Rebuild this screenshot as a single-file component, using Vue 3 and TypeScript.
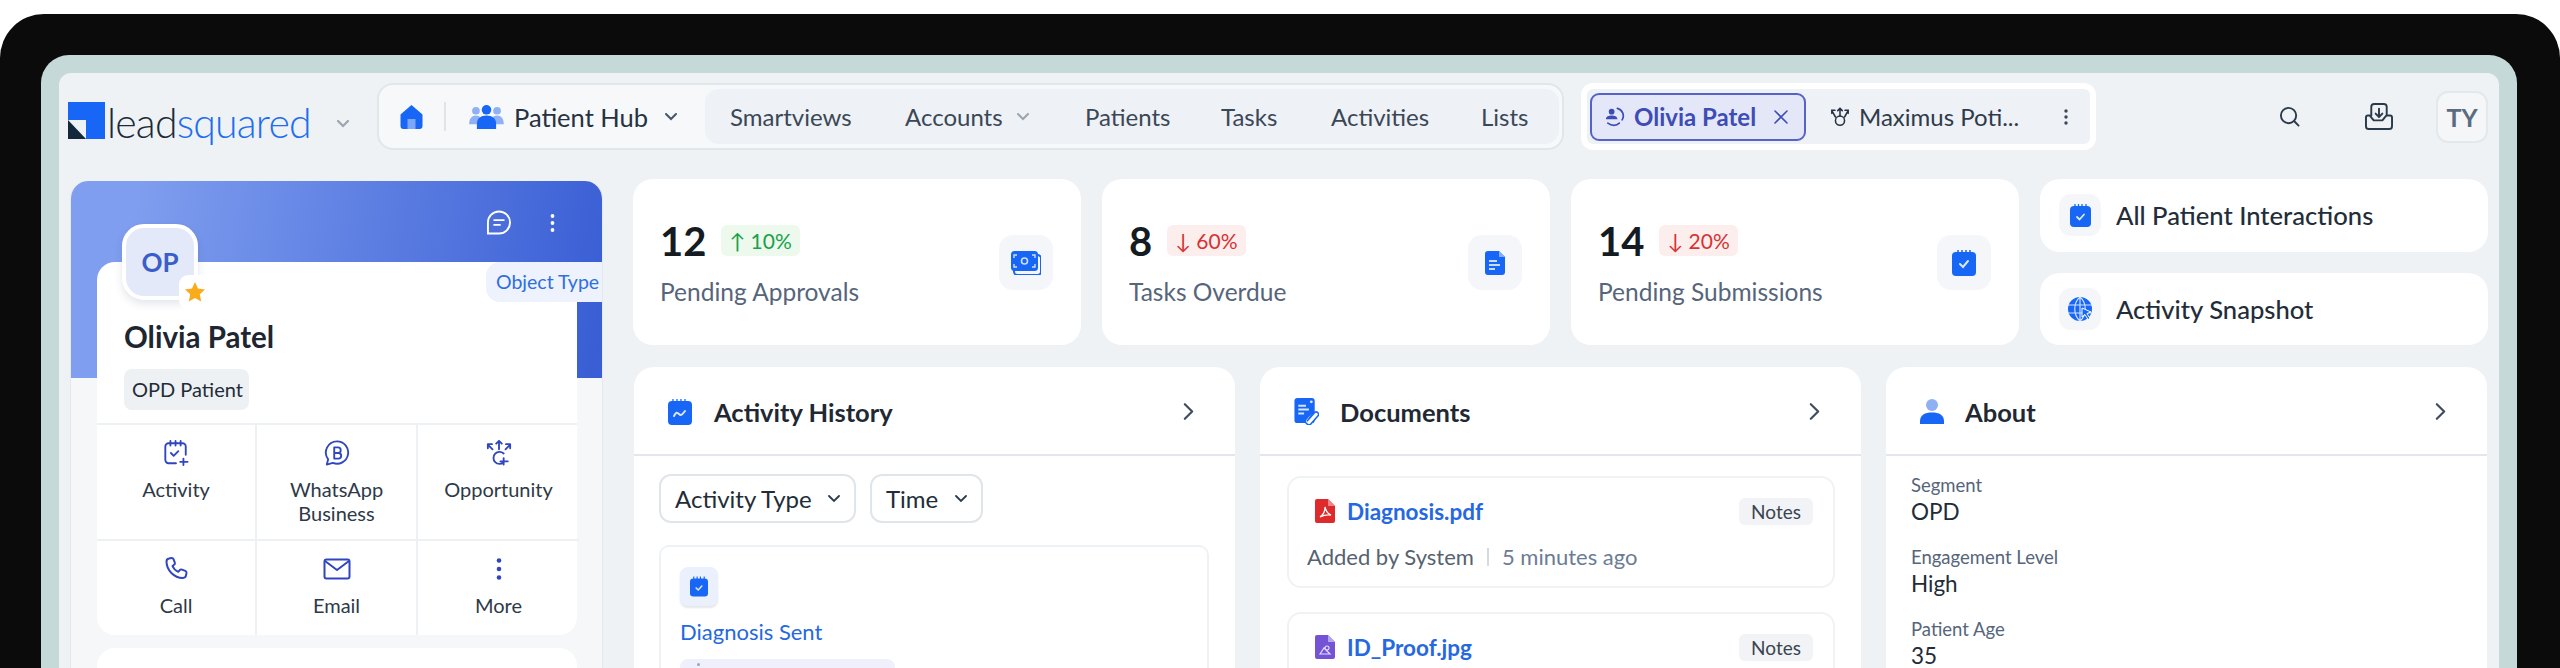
<script setup lang="ts">
const navItems = [
  { label: 'Smartviews', w: 125 },
  { label: 'Accounts', w: 96, chevron: true },
  { label: 'Patients', w: 86 },
  { label: 'Tasks', w: 60 },
  { label: 'Activities', w: 95 },
  { label: 'Lists', w: 48 },
]
const about = [
  { k: 'Segment', v: 'OPD' },
  { k: 'Engagement Level', v: 'High' },
  { k: 'Patient Age', v: '35' },
]
</script>

<template>
  <div class="page">
  <div class="frame">
    <div class="bezel">
      <div class="screen">
        <header class="top">
          <div class="logo">
            <svg class="logo-mark" viewBox="0 0 37 37" width="37" height="37">
              <rect width="37" height="37" fill="#1766f5" />
              <path d="M0 18h18v19H0z" fill="#eef2f5" />
              <path d="M0 18l18 19H0z" fill="#14283c" />
            </svg>
            <span class="logo-text"><span class="lead">lead</span><span class="squared">squared</span></span>
            <svg class="logo-chev" viewBox="0 0 12 8" width="12" height="8"><path d="M1 1l5 5 5-5" fill="none" stroke="#9aa5b1" stroke-width="2.2" stroke-linecap="round" /></svg>
          </div>

          <nav class="nav">
            <div class="nav-left">
              <svg class="home" viewBox="0 0 23 24" width="23" height="24">
                <path d="M11.5 0l11 9.5V21a3 3 0 0 1-3 3h-16a3 3 0 0 1-3-3V9.5z" fill="#1766f5" />
                <path d="M7.5 14h8v10h-8z" fill="#7ea6f7" />
              </svg>
              <span class="divider"></span>
              <svg class="people" viewBox="0 0 36 25" width="35" height="24">
                <circle cx="7" cy="6" r="4" fill="#8fb0f5" /><circle cx="29" cy="6" r="4" fill="#8fb0f5" />
                <path d="M0 20c0-6 3-9 7-9s7 3 7 9zM22 20c0-6 3-9 7-9s7 3 7 9z" fill="#8fb0f5" />
                <circle cx="18" cy="5" r="5" fill="#1766f5" />
                <path d="M8 25v-5c0-6 4-9 10-9s10 3 10 9v5z" fill="#1766f5" />
              </svg>
              <span class="hub">Patient Hub</span>
              <svg class="chev" viewBox="0 0 12 8" width="12" height="8"><path d="M1 1l5 5 5-5" fill="none" stroke="#47566a" stroke-width="2" stroke-linecap="round" /></svg>
            </div>
            <div class="nav-right">
              <span v-for="n in navItems" :key="n.label" class="nav-item" :style="{ width: n.w + 'px' }">{{ n.label }}
                <svg v-if="n.chevron" class="nav-chev" viewBox="0 0 12 8" width="12" height="8"><path d="M1 1l5 5 5-5" fill="none" stroke="#9aa5b1" stroke-width="2" stroke-linecap="round" /></svg>
              </span>
            </div>
          </nav>

          <div class="tabs">
            <div class="tab-active">
              <svg viewBox="0 0 22 22" width="21" height="21" fill="none">
                <circle cx="8" cy="6" r="3" fill="#3d4db5" /><path d="M2 14c0-3 3-4 6-4s6 1 6 4z" fill="#3d4db5" />
                <path d="M14 2.5a8 8 0 0 1 5 12M4 18c4 3 9 3 12 0" stroke="#3d4db5" stroke-width="1.8" stroke-linecap="round" />
              </svg>
              <span class="tab-name">Olivia Patel</span>
              <svg class="tab-x" viewBox="0 0 14 14" width="14" height="14"><path d="M1 1l12 12M13 1L1 13" stroke="#3d4db5" stroke-width="1.6" stroke-linecap="round" /></svg>
            </div>
            <div class="tab-other">
              <svg viewBox="0 0 22 22" width="20" height="20" fill="none" stroke="#263241" stroke-width="1.7" stroke-linecap="round">
                <circle cx="11" cy="15" r="5" /><path d="M11 10V2M8.5 4L11 1.5 13.5 4M6 11L2 4M2 7V3.5h3.5M16 11l4-7M20 7V3.5h-3.5" />
              </svg>
              <span class="tab-name2">Maximus Poti...</span>
              <svg class="tab-dots" viewBox="0 0 4 18" width="4" height="18"><circle cx="2" cy="3" r="1.7" fill="#3a4757" /><circle cx="2" cy="9" r="1.7" fill="#3a4757" /><circle cx="2" cy="15" r="1.7" fill="#3a4757" /></svg>
            </div>
          </div>

          <div class="top-actions">
            <svg viewBox="0 0 22 22" width="21" height="21" fill="none" stroke="#2b3a4a" stroke-width="2" stroke-linecap="round"><circle cx="10" cy="10" r="8" /><path d="M16 16l4.5 4.500" /></svg>
            <svg class="inbox" viewBox="0 0 30 28" width="30" height="27" fill="none" stroke="#2b3a4a" stroke-width="2" stroke-linecap="round" stroke-linejoin="round">
              <path d="M7 13V4a3 3 0 0 1 3-3h10a3 3 0 0 1 3 3v9M1.500 15v9a3 3 0 0 0 3 3h21a3 3 0 0 0 3-3v-9a2 2 0 0 0-2-2h-4l-4 5h-9l-4-5H3.500a2 2 0 0 0-2 2zM15 6v8M11.500 11l3.500 3.500 3.500-3.500" />
            </svg>
            <div class="user">TY</div>
          </div>
        </header>

        <main class="main">
          <aside class="profile">
            <div class="profile-actions">
              <svg viewBox="0 0 26 26" width="26" height="25" fill="none" stroke="#fff" stroke-width="2" stroke-linecap="round"><path d="M13 1.500a11.500 11.500 0 1 1 0 23H1.500V13A11.500 11.500 0 0 1 13 1.500zM8 10.500h10M8 15.500h6" /></svg>
              <svg viewBox="0 0 4 20" width="5" height="20"><circle cx="2" cy="3" r="1.900" fill="#fff" /><circle cx="2" cy="10" r="1.900" fill="#fff" /><circle cx="2" cy="17" r="1.900" fill="#fff" /></svg>
            </div>
            <div class="avatar">OP
              <span class="star"><svg viewBox="0 0 22 22" width="22" height="22"><path d="M11 1l3 6.600 7 .9-5.200 4.800 1.400 7.200L11 17l-6.200 3.500 1.400-7.200L1 8.500l7-.9z" fill="#f9ab1b" /></svg></span>
            </div>
            <div class="person">
              <span class="obj-type">Object Type</span>
              <h2 class="name">Olivia Patel</h2>
              <span class="chip">OPD Patient</span>
              <div class="actions">
                <div class="act">
                  <svg viewBox="0 0 28 28" width="28" height="28" fill="none" stroke="#2f46c0" stroke-width="2" stroke-linecap="round" stroke-linejoin="round"><path d="M14 25H6a3.500 3.500 0 0 1-3.500-3.500V7A3.500 3.500 0 0 1 6 3.500h15A3.500 3.500 0 0 1 24.500 7v9M8 1v5M13.500 1v5M19 1v5M8.500 14l3 3 5-5M22 20v7M18.500 23.500h8" /></svg>
                  <span>Activity</span>
                </div>
                <div class="act">
                  <svg viewBox="0 0 28 28" width="28" height="28" fill="none" stroke="#2f46c0" stroke-width="2" stroke-linecap="round" stroke-linejoin="round"><path d="M14 1.500a12 12 0 1 1-4.500 23.100L3 26.500l1.500-5.700A12 12 0 0 1 14 1.500zM11 8h4a2.800 2.800 0 0 1 0 6h-4zM11 14h4.500a2.900 2.900 0 0 1 0 6H11z" /></svg>
                  <span>WhatsApp<br />Business</span>
                </div>
                <div class="act">
                  <svg viewBox="0 0 28 28" width="28" height="28" fill="none" stroke="#2f46c0" stroke-width="2" stroke-linecap="round" stroke-linejoin="round"><path d="M14 10V1.500M11 4l3-3 3 3M7 10L2 5M2 9V4.500h4.500M21 10l5-5M26 9V4.500h-4.500M19 14.500A6.500 6.500 0 1 0 19 24M19 19.500v7M15.500 23h8" /></svg>
                  <span>Opportunity</span>
                </div>
                <div class="act">
                  <svg viewBox="0 0 24 24" width="24" height="25" fill="none" stroke="#2f46c0" stroke-width="2" stroke-linecap="round" stroke-linejoin="round"><path d="M5 1.500l2.500-.500a2 2 0 0 1 2 1.200l1.300 3.300a2 2 0 0 1-.7 2.300L8.500 9c1 2.500 3.200 4.700 5.800 5.800l1.400-1.600a2 2 0 0 1 2.300-.6l3.300 1.300a2 2 0 0 1 1.200 2l-.5 2.500a3 3 0 0 1-3 2.500C10 21 2.500 13 2.500 4.500A3 3 0 0 1 5 1.500z" /></svg>
                  <span>Call</span>
                </div>
                <div class="act">
                  <svg viewBox="0 0 28 22" width="28" height="22" fill="none" stroke="#2f46c0" stroke-width="2" stroke-linejoin="round"><rect x="1.500" y="1.500" width="25" height="19" rx="2" /><path d="M2 3l12 9 12-9" /></svg>
                  <span>Email</span>
                </div>
                <div class="act">
                  <svg viewBox="0 0 6 24" width="6" height="24"><circle cx="3" cy="3.500" r="2.300" fill="#2f46c0" /><circle cx="3" cy="12" r="2.300" fill="#2f46c0" /><circle cx="3" cy="20.500" r="2.300" fill="#2f46c0" /></svg>
                  <span>More</span>
                </div>
              </div>
            </div>
            <div class="profile-next"></div>
          </aside>

          <div class="content">
            <section class="stats">
              <div class="stat">
                <div class="stat-body">
                  <div class="stat-top"><span class="num">12</span><span class="delta up">↑ 10%</span></div>
                  <div class="stat-label">Pending Approvals</div>
                </div>
                <div class="stat-icon">
                  <svg viewBox="0 0 30 24" width="30" height="24">
                    <rect x="3" y="4" width="27" height="20" rx="3.500" fill="none" stroke="#1766f5" stroke-width="2" />
                    <rect width="27" height="20" rx="3.500" fill="#1766f5" />
                    <circle cx="13.500" cy="10" r="3" fill="none" stroke="#cfe0ff" stroke-width="1.600" />
                    <path d="M3 7V4h3M24 7V4h-3M3 13v3h3M24 13v3h-3" fill="none" stroke="#cfe0ff" stroke-width="1.400" />
                  </svg>
                </div>
              </div>
              <div class="stat">
                <div class="stat-body">
                  <div class="stat-top"><span class="num">8</span><span class="delta down">↓ 60%</span></div>
                  <div class="stat-label">Tasks Overdue</div>
                </div>
                <div class="stat-icon">
                  <svg viewBox="0 0 20 24" width="20" height="24">
                    <path d="M3 0h11l6 6v15a3 3 0 0 1-3 3H3a3 3 0 0 1-3-3V3a3 3 0 0 1 3-3z" fill="#1766f5" />
                    <path d="M14 0l6 6h-6z" fill="#86adf8" />
                    <path d="M4 10h8M4 14h11M4 18h6" stroke="#c9dcff" stroke-width="2" />
                  </svg>
                </div>
              </div>
              <div class="stat">
                <div class="stat-body">
                  <div class="stat-top"><span class="num">14</span><span class="delta down">↓ 20%</span></div>
                  <div class="stat-label">Pending Submissions</div>
                </div>
                <div class="stat-icon">
                  <svg viewBox="0 0 24 26" width="24" height="26">
                    <rect y="2" width="24" height="24" rx="4" fill="#1766f5" />
                    <path d="M6 0v3M10 0v3M14 0v3M18 0v3" stroke="#1766f5" stroke-width="1.500" />
                    <path d="M8 14l3 3 5-6" fill="none" stroke="#dbe8ff" stroke-width="2" stroke-linecap="round" />
                  </svg>
                </div>
              </div>
              <div class="shortcuts">
                <div class="shortcut">
                  <span class="short-icon">
                    <svg viewBox="0 0 21 23" width="21" height="23"><rect y="2" width="21" height="21" rx="4" fill="#1766f5" /><path d="M5 0v3M8.500 0v3M12 0v3M16 0v3" stroke="#1766f5" stroke-width="1.300" /><path d="M7 13l2.500 2.500L14 10.500" fill="none" stroke="#dbe8ff" stroke-width="1.800" stroke-linecap="round" /></svg>
                  </span>
                  <span class="short-label">All Patient Interactions</span>
                </div>
                <div class="shortcut">
                  <span class="short-icon">
                    <svg viewBox="0 0 24 26" width="24" height="26"><circle cx="12" cy="13" r="12" fill="#1766f5" /><path d="M0 9h24M0 17h24M12 1v24M12 1c-7 6-7 18 0 24M12 1c7 6 7 18 0 24" fill="none" stroke="#cfe0ff" stroke-width="1.200" /><path d="M14 12l9 4-4 1.500 3 5-2 1-3-5-3 2.500z" fill="#1766f5" stroke="#fff" stroke-width="1" /></svg>
                  </span>
                  <span class="short-label">Activity Snapshot</span>
                </div>
              </div>
            </section>

            <section class="panels">
              <article class="panel">
                <div class="panel-head">
                  <svg viewBox="0 0 24 26" width="24" height="26"><rect y="2" width="24" height="24" rx="4" fill="#1766f5" /><path d="M5 0v3M9 0v3M13 0v3M17 0v3" stroke="#1766f5" stroke-width="1.300" /><path d="M6 17c2-4 3-4 5-2s3 1 6-3" fill="none" stroke="#dbe8ff" stroke-width="2" stroke-linecap="round" /></svg>
                  <h3 class="first-title">Activity History</h3>
                  <svg class="head-chev" viewBox="0 0 12 20" width="11" height="19"><path d="M2 2l8 8-8 8" fill="none" stroke="#3f4d5e" stroke-width="2.400" stroke-linecap="round" stroke-linejoin="round" /></svg>
                </div>
                <div class="panel-body">
                  <div class="filters">
                    <div class="select sel-type">Activity Type<svg viewBox="0 0 12 8" width="12" height="8"><path d="M1 1l5 5 5-5" fill="none" stroke="#2b3a4a" stroke-width="1.800" stroke-linecap="round" /></svg></div>
                    <div class="select sel-time">Time<svg viewBox="0 0 12 8" width="12" height="8"><path d="M1 1l5 5 5-5" fill="none" stroke="#2b3a4a" stroke-width="1.800" stroke-linecap="round" /></svg></div>
                  </div>
                  <div class="timeline-card">
                    <span class="tl-icon">
                      <svg viewBox="0 0 19 21" width="18" height="21"><rect y="2" width="19" height="19" rx="3.500" fill="#1766f5" /><path d="M4 0v3M7.500 0v3M11 0v3M15 0v3" stroke="#1766f5" stroke-width="1.200" /><path d="M6.500 12l2.200 2.200L12.500 10" fill="none" stroke="#dbe8ff" stroke-width="1.600" stroke-linecap="round" /></svg>
                    </span>
                    <div class="tl-title">Diagnosis Sent</div>
                    <div class="tl-tag"><span class="tl-mark"></span></div>
                  </div>
                </div>
              </article>

              <article class="panel">
                <div class="panel-head">
                  <svg viewBox="0 0 25 28" width="25" height="27">
                    <path d="M3 0h15a3 3 0 0 1 3 3v20a3 3 0 0 1-3 3H3a3 3 0 0 1-3-3V3a3 3 0 0 1 3-3z" fill="#1766f5" />
                    <path d="M4 8h8M4 12h11M4 16h6" stroke="#d6e4ff" stroke-width="2" />
                    <circle cx="17.500" cy="4" r="1.500" fill="#d6e4ff" />
                    <path d="M13 24l8-9a2.500 2.500 0 0 1 3.500 3.500l-8 9a4 4 0 0 1-5-5l7-8" fill="#fff" stroke="#1766f5" stroke-width="1.600" />
                  </svg>
                  <h3>Documents</h3>
                  <svg class="head-chev" viewBox="0 0 12 20" width="11" height="19"><path d="M2 2l8 8-8 8" fill="none" stroke="#3f4d5e" stroke-width="2.400" stroke-linecap="round" stroke-linejoin="round" /></svg>
                </div>
                <div class="panel-body docs">
                  <div class="doc">
                    <div class="doc-top">
                      <svg viewBox="0 0 20 24" width="20" height="24"><path d="M2 0h11l7 7v15a2 2 0 0 1-2 2H2a2 2 0 0 1-2-2V2a2 2 0 0 1 2-2z" fill="#de2a2a" /><path d="M13 0l7 7h-7z" fill="#f08585" /><path d="M5 18c3-2 5-6 5-10 1 4 3 7 6 8-4-.5-7 0-11 2z" fill="none" stroke="#fff" stroke-width="1.300" /></svg>
                      <span class="doc-name">Diagnosis.pdf</span>
                      <span class="notes">Notes</span>
                    </div>
                    <div class="doc-sub"><span class="by">Added by System</span><span class="sep"></span><span class="ago">5 minutes ago</span></div>
                  </div>
                  <div class="doc">
                    <div class="doc-top">
                      <svg viewBox="0 0 20 24" width="20" height="24"><path d="M2 0h11l7 7v15a2 2 0 0 1-2 2H2a2 2 0 0 1-2-2V2a2 2 0 0 1 2-2z" fill="#7453d4" /><path d="M13 0l7 7h-7z" fill="#b6a4ec" /><path d="M5 19l4-6 3 3 3 3zM12 11a2 2 0 1 0 .1 0" fill="none" stroke="#e6dfff" stroke-width="1.200" /></svg>
                      <span class="doc-name">ID_Proof.jpg</span>
                      <span class="notes">Notes</span>
                    </div>
                  </div>
                </div>
              </article>

              <article class="panel">
                <div class="panel-head">
                  <svg viewBox="0 0 24 25" width="24" height="25"><circle cx="12" cy="6" r="6" fill="#8fb0f5" /><path d="M0 25v-3c0-6 5-8.500 12-8.500s12 2.500 12 8.500v3z" fill="#1766f5" /></svg>
                  <h3>About</h3>
                  <svg class="head-chev" viewBox="0 0 12 20" width="11" height="19"><path d="M2 2l8 8-8 8" fill="none" stroke="#3f4d5e" stroke-width="2.400" stroke-linecap="round" stroke-linejoin="round" /></svg>
                </div>
                <div class="about">
                  <div v-for="a in about" :key="a.k" class="field">
                    <div class="f-key">{{ a.k }}</div>
                    <div class="f-val">{{ a.v }}</div>
                  </div>
                </div>
              </article>
            </section>
          </div>
        </main>
      </div>
    </div>
  </div>
  </div>
</template>

<style>
html, body { margin: 0; background: #fff; height: 668px; overflow: hidden; }
</style>

<style scoped>
* { box-sizing: border-box; }
.page { height: 668px; padding-top: 14px; overflow: hidden; }
.frame {
  height: 654px; background: #0c0b0c; border-radius: 44px 44px 0 0;
  padding: 41px 43px 0 41px; overflow: hidden;
  font-family: Lato, "Noto Sans", sans-serif; color: #222c38;
}
.bezel { height: 100%; background: #c5d9d9; border-radius: 28px 28px 0 0; padding: 18px 18px 0 18px; }
.screen { height: 100%; background: #eef2f5; border-radius: 12px 12px 0 0; padding: 10px 11px 0 11px; overflow: hidden; }

.top { display: flex; align-items: center; height: 67px; }
.logo { display: flex; align-items: flex-start; width: 309px; margin-left: -2px; padding-top: 12px; }
.logo-text { font-size: 41px; font-weight: 300; line-height: 42px; margin-left: 2px; letter-spacing: -.8px; width: 228px; white-space: nowrap; }
.lead { color: #1c2a38; }
.squared { color: #1f6ef0; }
.logo-chev { margin-top: 18px; margin-left: 2px; }

.nav { display: flex; align-items: center; width: 1187px; height: 67px; border: 2px solid #e1e6eb; border-radius: 16px; background: #f6f8fa; padding-left: 21px; }
.nav-left { display: flex; align-items: center; width: 305px; }
.divider { width: 2px; height: 29px; background: #dfe4e9; margin: 0 23px 0 21px; }
.hub { font-size: 25.5px; margin-left: 10px; color: #263241; white-space: nowrap; }
.chev { margin-left: 17px; }
.nav-right { flex: 1; height: 55px; margin-right: 3px; display: flex; align-items: center; gap: 50px; background: #eef1f5; border-radius: 14px; padding-left: 25px; }
.nav-item { font-size: 24px; color: #3a4757; white-space: nowrap; position: relative; }
.nav-chev { position: absolute; left: 112px; top: 11px; }
.nav-item:nth-child(2) { margin-right: 34px; }
.nav-item:nth-child(6) { margin-left: 5px; }

.tabs { display: flex; align-items: center; margin-left: 17px; width: 515px; height: 67px; background: #eef1f5; border: 6px solid #fff; border-radius: 12px; padding-left: 3px; }
.tab-active { display: flex; align-items: center; width: 216px; height: 48px; border: 2px solid #5563c9; background: #e4e7f8; border-radius: 9px; padding-left: 12px; }
.tab-name { font-size: 24px; font-weight: 700; color: #3d4db5; margin-left: 9px; white-space: nowrap; }
.tab-x { margin-left: 18px; }
.tab-other { display: flex; align-items: center; padding-left: 24px; flex: 1; }
.tab-name2 { font-size: 24px; color: #2f3b4a; margin-left: 9px; white-space: nowrap; }
.tab-dots { margin-left: 45px; }

.top-actions { display: flex; align-items: center; margin-left: auto; }
.inbox { margin-left: 64px; }
.user { margin-left: 42px; width: 52px; height: 52px; border: 2px solid #e3e8ec; background: #f4f6f8; border-radius: 12px; font-size: 25px; font-weight: 700; color: #5a6c7f; display: flex; align-items: center; justify-content: center; }

.main { display: grid; grid-template-columns: 533px 1855px; gap: 30px; margin-top: 29px; height: 600px; }
.profile { position: relative; margin-top: 2px; height: 600px; border-radius: 18px 18px 0 0; padding: 0 25px 0 26px;
  background: linear-gradient(100deg, #7f9eef 12%, #385dd4 100%) 0 0 / 100% 197px no-repeat, #f5f7f9;
  border: 1px solid #e4e8ec; border-top: 0; border-bottom: 0; }
.profile-actions { position: absolute; right: 47px; top: 29px; display: flex; align-items: center; gap: 38px; }
.avatar { position: absolute; left: 51px; top: 43px; width: 76px; height: 76px; border: 4px solid #fff; border-radius: 22px; background: #e3e9f8; color: #3a5ec9; font-size: 26px; font-weight: 700; display: flex; align-items: center; justify-content: center; box-shadow: 0 4px 8px rgba(30, 50, 90, .12); z-index: 2; }
.star { position: absolute; right: -17px; bottom: -13px; width: 32px; height: 34px; background: #fff; border-radius: 9px; display: flex; align-items: center; justify-content: center; }
.person { position: relative; top: 81px; height: 373px; background: #fff; border-radius: 18px; padding-top: 58px; margin-bottom: 13px; }
.obj-type { position: absolute; right: -25px; top: 0; width: 116px; height: 40px; padding-left: 10px; background: #edf2fd; color: #2f6fe0; font-size: 19.5px; line-height: 40px; border-radius: 14px 0 0 14px; white-space: nowrap; }
.name { margin: 0 0 0 27px; font-size: 29.5px; font-weight: 700; line-height: 34px; color: #1d2631; }
.chip { display: inline-block; margin: 15px 0 0 27px; height: 41px; line-height: 41px; padding: 0 8px; width: 125px; background: #eef1f4; border-radius: 8px; font-size: 20px; white-space: nowrap; }
.actions { margin-top: 13px; display: grid; grid-template-columns: 160px 161px 161px; grid-template-rows: 116px 94px; border-top: 2px solid #eef1f4; }
.act { display: flex; flex-direction: column; align-items: center; font-size: 20px; line-height: 24px; text-align: center; color: #2e3947; padding-top: 15px; }
.act svg { height: 26px; margin-bottom: 11px; }
.act:nth-child(-n+3) { border-bottom: 2px solid #eef1f4; }
.act:nth-child(3n+1), .act:nth-child(3n+2) { border-right: 2px solid #eef1f4; }
.profile-next { position: relative; top: 81px; height: 200px; background: #fff; border-radius: 18px; }

.stats { display: grid; grid-template-columns: repeat(4, 448px); gap: 21px; height: 166px; }
.stat { background: #fff; border-radius: 20px; padding: 46px 28px 0 27px; display: flex; justify-content: space-between; }
.stat-top { display: flex; align-items: center; gap: 15px; height: 32px; }
.num { font-size: 40px; font-weight: 700; color: #151b22; }
.delta { height: 31px; line-height: 31px; border-radius: 6px; padding: 0 8px; font-size: 21px; white-space: nowrap; margin-top: -2px; }
.up { background: #edf9ed; color: #17a349; }
.down { background: #fdeeee; color: #d63333; }
.stat-label { font-size: 24.5px; color: #56657a; margin-top: 20px; white-space: nowrap; }
.stat-icon { width: 54px; height: 55px; background: #f4f6f9; border-radius: 14px; margin-top: 10px; display: flex; align-items: center; justify-content: center; }
.shortcuts { display: flex; flex-direction: column; gap: 21px; }
.shortcut { flex: 1; background: #fff; border-radius: 20px; padding-left: 19px; display: flex; align-items: center; gap: 15px; }
.short-icon { width: 42px; height: 42px; background: #f4f6f9; border-radius: 12px; display: flex; align-items: center; justify-content: center; }
.short-label { font-size: 25.6px; font-weight: 500; color: #232d3a; white-space: nowrap; }

.panels { display: grid; grid-template-columns: repeat(3, 601px); gap: 25px; margin-top: 22px; margin-left: 1px; }
.panel { background: #fff; border-radius: 20px 20px 0 0; height: 320px; overflow: hidden; }
.panel-head { height: 89px; border-bottom: 2px solid #e3e7eb; display: flex; align-items: center; padding: 2px 34px 0; gap: 21px; }
.panel-head h3 { margin: 0; font-size: 25.5px; font-weight: 700; color: #1f2833; }
.panel-head .first-title { margin-left: 1px; }
.head-chev { margin-left: auto; margin-right: 7px; }
.panel-body { padding: 18px 26px 0 25px; }
.filters { display: flex; gap: 14px; }
.select { height: 49px; border: 2px solid #e0e5ea; border-radius: 12px; display: flex; align-items: center; justify-content: space-between; padding: 0 14px; font-size: 24px; color: #222c38; }
.sel-type { width: 197px; }
.sel-time { width: 113px; }
.timeline-card { margin-top: 22px; border: 2px solid #eff2f5; border-radius: 10px; padding: 20px 20px 20px 19px; height: 200px; }
.tl-icon { width: 38px; height: 39px; background: #eaf0fc; border-radius: 8px; display: flex; align-items: center; justify-content: center; box-shadow: 0 2px 2px rgba(30, 50, 90, .12); }
.tl-title { margin-top: 12px; font-size: 22px; color: #2668e0; }
.tl-tag { margin-top: 14px; width: 215px; height: 30px; border-radius: 8px; background: #f0f0fc; padding: 4px 0 0 17px; }
.tl-mark { display: block; width: 3px; height: 3px; border-radius: 50%; background: #9aa5c0; }
.docs { padding: 20px 26px 0 27px; }
.doc { height: 112px; border: 2px solid #f0f3f6; border-radius: 14px; padding: 0 20px 0 18px; margin-bottom: 24px; }
.doc-top { display: flex; align-items: center; gap: 12px; height: 46px; padding: 20px 0 0 8px; }
.doc-name { font-size: 22.5px; font-weight: 700; color: #2668e0; }
.notes { margin-left: auto; width: 74px; height: 27px; line-height: 27px; text-align: center; background: #f1f3f6; border-radius: 6px; font-size: 19px; color: #39454f; }
.doc-sub { display: flex; align-items: center; margin-top: 19px; font-size: 22px; }
.by { color: #55626f; }
.sep { width: 2px; height: 18px; margin: 0 13px; background: #d4dae0; }
.ago { color: #6b7c93; }
.about { padding: 18px 25px; }
.field { height: 72px; }
.f-key { font-size: 18.5px; line-height: 23px; color: #56657a; }
.f-val { font-size: 22.5px; line-height: 30px; color: #222c38; }
</style>
